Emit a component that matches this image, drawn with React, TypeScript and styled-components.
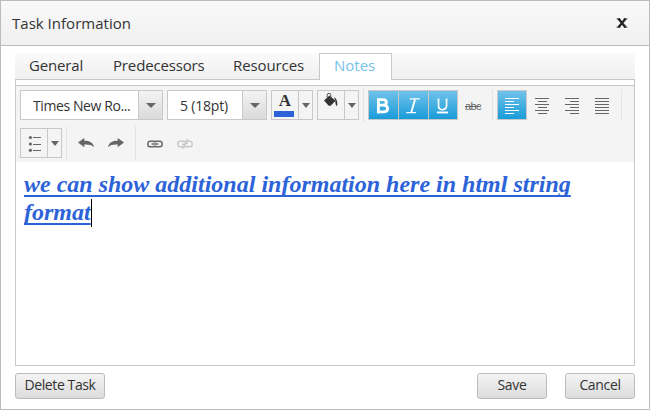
import React from "react";
import styled, { createGlobalStyle, css } from "styled-components";

const GlobalStyle = createGlobalStyle`
  * { box-sizing: border-box; }
  body { margin: 0; background: #fff; }
`;

const LINE = "#c8c8c8";
const ICON = "#666";

const Dialog = styled.div`
  width: 650px;
  height: 410px;
  display: flex;
  flex-direction: column;
  border: 1px solid #bbbcbb;
  background: #fff;
  color: #333;
  font-family: "Open Sans", "Noto Sans", sans-serif;
  font-size: 14px;
`;

const Header = styled.header`
  flex: none;
  height: 45px;
  display: flex;
  align-items: center;
  justify-content: space-between;
  padding: 0 21px 0 11px;
  border-bottom: 1px solid #bbbcbb;
  background: linear-gradient(#f9f9f9, #f0f0f0);
`;

const CloseButton = styled.button`
  display: flex;
  padding: 0;
  border: 0;
  background: none;
`;

const Label = styled.span<{ $size?: number; $track?: number }>`
  white-space: nowrap;
  line-height: 20px;
  font-size: ${(p) => p.$size ?? 14}px;
  letter-spacing: ${(p) => p.$track ?? 0}px;
`;

const Body = styled.main`
  flex: 1;
  display: flex;
  flex-direction: column;
  padding: 7px 14px 10px;
`;

const TabStrip = styled.nav`
  flex: none;
  height: 27px;
  display: flex;
  background: linear-gradient(#fafafa, #f0f0f0);
  border-bottom: 1px solid ${LINE};
`;

const Tab = styled.div<{ $width: number; $active?: boolean }>`
  width: ${(p) => p.$width}px;
  height: 26px;
  padding: 2px 0 0 14px;
  ${(p) =>
    p.$active &&
    css`
      height: 27px;
      padding-top: 1px;
      border: 1px solid ${LINE};
      border-bottom: 0;
      background: #fff;
      color: #74c3e8;
    `}
`;

const Panel = styled.section`
  flex: 1;
  display: flex;
  flex-direction: column;
  padding-top: 5px;
  border: 1px solid ${LINE};
  border-top: 0;
`;

const Toolbar = styled.div`
  flex: none;
  height: 77px;
  display: flex;
  flex-direction: column;
  gap: 8px;
  padding: 4px 0 0 4px;
  border-top: 1px solid ${LINE};
  background: #f4f4f4;
`;

const ToolRow = styled.div`
  height: 30px;
  display: flex;
  align-items: center;
`;

const Box = styled.div<{ $width: number; $fill?: string }>`
  width: ${(p) => p.$width}px;
  height: 30px;
  margin-right: 4px;
  display: flex;
  border: 1px solid ${LINE};
  background: ${(p) => p.$fill ?? "transparent"};
`;

const BoxMain = styled.div<{ $indent?: number }>`
  flex: 1;
  display: flex;
  align-items: center;
  justify-content: ${(p) => (p.$indent ? "flex-start" : "center")};
  padding: ${(p) => (p.$indent ? 2 : 0)}px 0 0 ${(p) => p.$indent ?? 0}px;
  overflow: hidden;
`;

const Drop = styled.div<{ $width: number; $shaded?: boolean }>`
  width: ${(p) => p.$width}px;
  display: flex;
  align-items: center;
  justify-content: center;
  border-left: 1px solid ${LINE};
  background: ${(p) => (p.$shaded ? "linear-gradient(#f3f3f3, #dadada)" : "none")};
`;

const Separator = styled.i<{ $before?: number; $after: number; $height?: number }>`
  width: 1px;
  height: ${(p) => p.$height ?? 30}px;
  margin: -2px ${(p) => p.$after}px -2px ${(p) => p.$before ?? 0}px;
  background: repeating-linear-gradient(#d3d3d3 0 1px, transparent 1px 2px);
`;

const Tool = styled.button<{ $on?: boolean; $joined?: boolean }>`
  width: ${(p) => (p.$joined ? 31 : 30)}px;
  height: 30px;
  margin: 0 ${(p) => (p.$joined ? -1 : 0)}px 0 0;
  padding: 0;
  display: flex;
  align-items: center;
  justify-content: center;
  border: 1px solid ${(p) => (p.$on ? LINE : "transparent")};
  background: ${(p) => (p.$on ? "linear-gradient(#73c4ea, #169ad9) border-box" : "none")};
`;

const Strike = styled.span`
  font-size: 11px;
  line-height: 14px;
  letter-spacing: -0.6px;
  color: ${ICON};
  padding-top: 2px;
  text-decoration: line-through;
`;

const Editor = styled.div`
  flex: 1;
  padding: 8px;
  color: #2d63d8;
  font: italic bold 24px/28px "Liberation Serif", "Times New Roman", serif;
  text-decoration: underline 2px;
  text-decoration-skip-ink: none;
  text-underline-offset: 3px;
  white-space: nowrap;
`;

const Caret = styled.span`
  display: inline-block;
  width: 1px;
  height: 28px;
  vertical-align: -7px;
  background: #000;
`;

const Footer = styled.footer`
  flex: none;
  display: flex;
  gap: 18px;
  padding-top: 7px;
`;

const Button = styled.button<{ $width: number; $push?: boolean }>`
  width: ${(p) => p.$width}px;
  height: 26px;
  margin-left: ${(p) => (p.$push ? "auto" : "0")};
  padding: 0 0 2px;
  display: flex;
  justify-content: center;
  align-items: center;
  border: 1px solid #bcbcbc;
  border-radius: 3px;
  background: linear-gradient(#f4f4f4, #dcdcdc);
  color: #333;
  font-family: inherit;
`;

const Arrow = ({ small }: { small?: boolean }) => (
  <svg width={small ? 8 : 10} height="5" viewBox="0 0 10 5" preserveAspectRatio="none">
    <path d="M0 0h10L5 5z" fill="#666" />
  </svg>
);

type AlignKind = "left" | "center" | "right" | "justify";

const AlignIcon = ({ kind, color = ICON }: { kind: AlignKind; color?: string }) => (
  <svg width="14" height="18" viewBox="0 -2 14 18" fill={color} shapeRendering="crispEdges">
    {[0, 1, 2, 3, 4, 5].map((i) => {
      const w = kind === "justify" || i % 2 === 0 ? 14 : 9;
      const x = kind === "right" ? 14 - w : kind === "center" && w === 9 ? 3 : 0;
      return <rect key={i} x={x} y={i * 3} width={w} height="1" />;
    })}
  </svg>
);

const BoldIcon = () => (
  <svg width="30" height="28" viewBox="0 0 30 28" fill="none" stroke="#fff">
    <path d="M10 8.5h4.5c4.6 0 4.6 5.7 0 5.7H10h5c5.6 0 5.6 7 0 7H10M9.7 7v15.7" strokeWidth="2.9" />
  </svg>
);

const ItalicIcon = () => (
  <svg width="30" height="28" viewBox="0 0 30 28" fill="none" stroke="#fff">
    <path d="M11 7.7h10.5M7.5 22h10" strokeWidth="1.3" />
    <path d="M16.6 8l-4 14" strokeWidth="1.9" />
  </svg>
);

const UnderlineIcon = () => (
  <svg width="30" height="28" viewBox="0 0 30 28" fill="none" stroke="#fff">
    <path d="M10.2 7v7.7c0 5.6 8.6 5.6 8.6 0V7" strokeWidth="1.8" />
    <path d="M8.5 22h12" strokeWidth="2" />
  </svg>
);

const FontColorIcon = () => (
  <svg width="26" height="28" viewBox="0 0 26 28">
    <text x="13" y="15" textAnchor="middle" fontFamily="Liberation Serif, serif" fontWeight="700" fontSize="17" fill="#333">A</text>
    <rect x="2" y="20" width="20" height="6" fill="#2d63d8" />
  </svg>
);

const FillIcon = () => (
  <svg width="26" height="28" viewBox="0 0 26 28" fill="#333">
    <path d="M6 9.6l5.5-5.1 6 5.2-4.6 4.8q-1.2.8-2.4.1z" />
    <path d="M9.2 8V4.3q0-2 1.8-2t1.8 2V8" fill="none" stroke="#555" strokeWidth="1" />
    <path d="M15.8 6.2q4 1.2 3.4 8.8-1.7-.2-1.7-2.4l-.2-3z" />
  </svg>
);

const ListIcon = () => (
  <svg width="26" height="28" viewBox="0 0 26 28" fill={ICON}>
    {[8.5, 15, 21.3].map((y) => (
      <g key={y}>
        <circle cx="9.4" cy={y} r="1.6" />
        <rect x="12" y={Math.round(y - 0.5)} width="8" height="1" />
      </g>
    ))}
  </svg>
);

const HistoryIcon = ({ redo }: { redo?: boolean }) => (
  <svg width="16" height="10" viewBox="0 0 16 10" fill="#666">
    <path transform={redo ? "translate(16 0) scale(-1 1)" : undefined} d="M0 4.5L6.3 0v2.7c5 0 9 1.6 9.7 6.6-2.4-2.5-5-3-9.7-2.8v2.8z" />
  </svg>
);

const LinkIcon = ({ broken }: { broken?: boolean }) => (
  <svg width="16" height="12" viewBox="0 -2 16 12" fill="none" stroke={broken ? "#c8c8c8" : "#666"} strokeWidth="1.4">
    <path d="M7.2 3.4V2.2H3Q.8 2.2.8 5T3 7.8h4.2V6.6M8.8 3.4V2.2H13q2.2 0 2.2 2.8T13 7.8H8.8V6.6" />
    <path d={broken ? "M10.8 0L8.2 4.6H11M5 5.4h2.8L5.4 9.8" : "M4.5 5h7"} />
  </svg>
);

export default function App() {
  return (
    <>
      <GlobalStyle />
      <Dialog>
        <Header>
          <Label $size={15} $track={0.02}>Task Information</Label>
          <CloseButton aria-label="Close">
            <svg width="12" height="10" viewBox="0 0 12 10" fill="none" stroke="#222">
              <path d="M2.5 .8l7 8.4M9.5 .8l-7 8.4" strokeWidth="2.3" />
              <path d="M.7 .9h3.5M7.8 .9h3.5M.7 9.1h3.5M7.8 9.1h3.5" strokeWidth="1" />
            </svg>
          </CloseButton>
        </Header>
        <Body>
          <TabStrip>
            <Tab $width={84}><Label $size={15} $track={-0.15}>General</Label></Tab>
            <Tab $width={120}><Label $size={15} $track={-0.15}>Predecessors</Label></Tab>
            <Tab $width={100}><Label $size={15} $track={-0.1}>Resources</Label></Tab>
            <Tab $width={73} $active><Label $size={15}>Notes</Label></Tab>
          </TabStrip>
          <Panel>
            <Toolbar>
              <ToolRow>
                <Box $width={143} $fill="#fff">
                  <BoxMain $indent={12}><Label $track={-0.4}>Times New Ro...</Label></BoxMain>
                  <Drop $width={24} $shaded><Arrow /></Drop>
                </Box>
                <Box $width={100} $fill="#fff">
                  <BoxMain $indent={12}><Label $track={-0.2}>5 (18pt)</Label></BoxMain>
                  <Drop $width={24} $shaded><Arrow /></Drop>
                </Box>
                <Box $width={42}>
                  <BoxMain><FontColorIcon /></BoxMain>
                  <Drop $width={14}><Arrow small /></Drop>
                </Box>
                <Box $width={42}>
                  <BoxMain><FillIcon /></BoxMain>
                  <Drop $width={14}><Arrow small /></Drop>
                </Box>
                <Separator $after={4} $height={34} />
                <Tool $on $joined><BoldIcon /></Tool>
                <Tool $on $joined><ItalicIcon /></Tool>
                <Tool $on><UnderlineIcon /></Tool>
                <Tool><Strike>abc</Strike></Tool>
                <Separator $before={4} $after={4} />
                <Tool $on><AlignIcon kind="left" color="#fff" /></Tool>
                <Tool><AlignIcon kind="center" /></Tool>
                <Tool><AlignIcon kind="right" /></Tool>
                <Tool><AlignIcon kind="justify" /></Tool>
                <Separator $before={4} $after={0} />
              </ToolRow>
              <ToolRow>
                <Box $width={42}>
                  <BoxMain><ListIcon /></BoxMain>
                  <Drop $width={14}><Arrow small /></Drop>
                </Box>
                <Separator $after={4} $height={34} />
                <Tool><HistoryIcon /></Tool>
                <Tool><HistoryIcon redo /></Tool>
                <Separator $before={4} $after={4} $height={34} />
                <Tool><LinkIcon /></Tool>
                <Tool><LinkIcon broken /></Tool>
              </ToolRow>
            </Toolbar>
            <Editor>
              we can show additional information here in html string<br />
              format<Caret />
            </Editor>
          </Panel>
          <Footer>
            <Button $width={90}><Label $track={-0.4}>Delete Task</Label></Button>
            <Button $width={70} $push><Label $track={-0.3}>Save</Label></Button>
            <Button $width={70}><Label $track={-0.35}>Cancel</Label></Button>
          </Footer>
        </Body>
      </Dialog>
    </>
  );
}
